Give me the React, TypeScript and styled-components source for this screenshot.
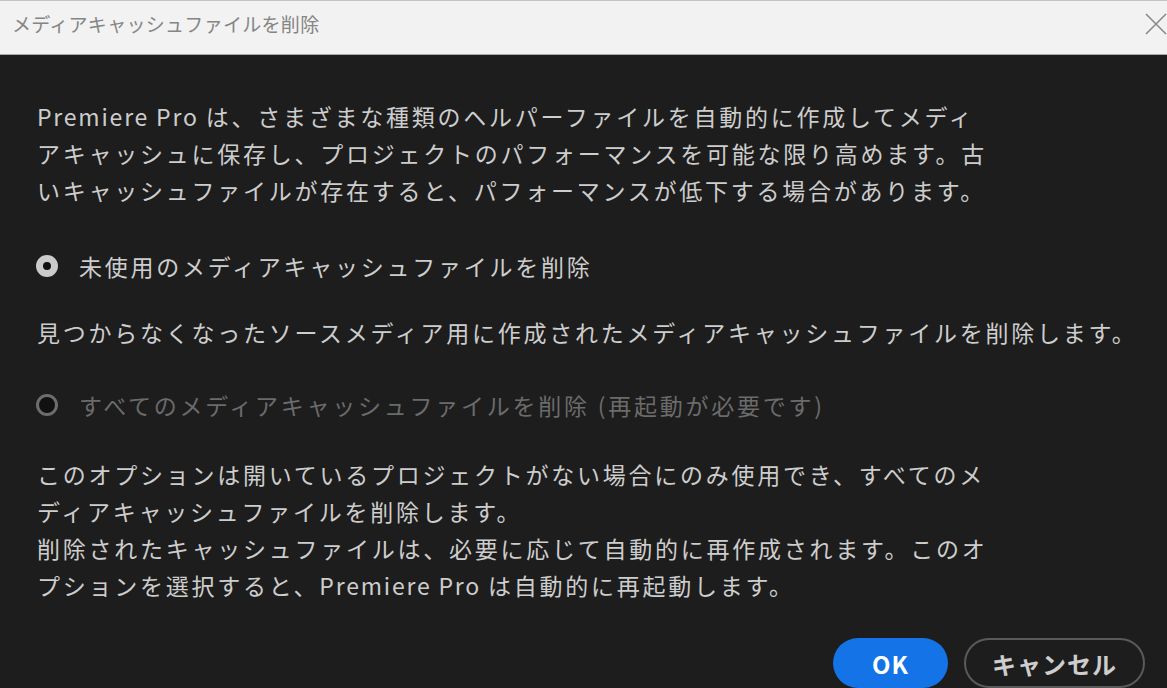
import React from "react";
import styled, { createGlobalStyle } from "styled-components";

const Global = createGlobalStyle`
  html, body { margin: 0; padding: 0; background: #1d1d1d; }
  body { width: 1167px; height: 688px; overflow: hidden; }
  * { box-sizing: border-box; }
`;

const FONT = `"Noto Sans CJK JP", "Noto Sans", sans-serif`;

const Dialog = styled.div`
  width: 1167px;
  height: 688px;
  display: flex;
  flex-direction: column;
  background: #1d1d1d;
  font-family: ${FONT};
  overflow: hidden;
`;

const TitleBar = styled.div`
  height: 55px;
  flex: none;
  display: flex;
  align-items: center;
  justify-content: space-between;
  background: #f2f2f2;
  border-top: 1px solid #c4c4c4;
  border-bottom: 1px solid #a9a9a9;
  padding: 0 0 8px 12px;
`;

const Title = styled.div`
  font-size: 19px;
  color: #858585;
  letter-spacing: 0.3px;
`;

const CloseBtn = styled.div`
  width: 22px;
  height: 22px;
  display: flex;
`;

const Body = styled.div`
  flex: 1;
  display: flex;
  flex-direction: column;
  padding: 43px 22px 0 37px;
`;

const Para = styled.p<{ $mt?: number }>`
  margin: ${(p) => p.$mt ?? 0}px 0 0 0;
  font-size: 23px;
  line-height: 37px;
  letter-spacing: 2.75px;
  color: #cdcdcd;
  white-space: nowrap;
`;

const Latin = styled.span`
  letter-spacing: 1.8px;
`;

const RadioRow = styled.div<{ $mt: number; $disabled?: boolean }>`
  margin-top: ${(p) => p.$mt}px;
  display: flex;
  align-items: center;
  height: 37px;
  gap: 21px;
  font-size: 23px;
  letter-spacing: 2.75px;
  color: ${(p) => (p.$disabled ? "#6b6b6b" : "#cdcdcd")};
  white-space: nowrap;
`;

const Radio = styled.span<{ $checked?: boolean }>`
  flex: none;
  width: 22px;
  height: 22px;
  border-radius: 50%;
  margin-left: -1px;
  background: #111;
  border: ${(p) => (p.$checked ? "7px solid #cbcbcb" : "3px solid #6d6d6d")};
`;

const Buttons = styled.div`
  margin-top: 34px;
  display: flex;
  justify-content: flex-end;
  gap: 16px;
`;

const Button = styled.button<{ $primary?: boolean }>`
  height: 50px;
  border-radius: 25px;
  font-family: ${FONT};
  font-weight: 700;
  font-size: 24px;
  letter-spacing: 1px;
  cursor: pointer;
  display: flex;
  align-items: center;
  justify-content: center;
  ${(p) =>
    p.$primary
      ? `
    width: 115px;
    background: #1473e6;
    border: none;
    color: #ffffff;
  `
      : `
    width: 181px;
    background: transparent;
    border: 2px solid #5a5a5a;
    color: #cdcdcd;
  `}
`;

export default function App() {
  return (
    <>
      <Global />
      <Dialog>
        <TitleBar>
          <Title>メディアキャッシュファイルを削除</Title>
          <CloseBtn>
            <svg width="22" height="22" viewBox="0 0 22 22">
              <path d="M1 1 L21 21 M21 1 L1 21" stroke="#8a8a8a" strokeWidth="1.6" fill="none" />
            </svg>
          </CloseBtn>
        </TitleBar>
        <Body>
          <Para>
            <Latin>Premiere Pro </Latin>は、さまざまな種類のヘルパーファイルを自動的に作成してメディ
            <br />
            アキャッシュに保存し、プロジェクトのパフォーマンスを可能な限り高めます。古
            <br />
            いキャッシュファイルが存在すると、パフォーマンスが低下する場合があります。
          </Para>
          <RadioRow $mt={38}>
            <Radio $checked />
            未使用のメディアキャッシュファイルを削除
          </RadioRow>
          <Para $mt={30}>
            見つからなくなったソースメディア用に作成されたメディアキャッシュファイルを削除します。
          </Para>
          <RadioRow $mt={35} $disabled>
            <Radio />
            すべてのメディアキャッシュファイルを削除 (再起動が必要です)
          </RadioRow>
          <Para $mt={33}>
            このオプションは開いているプロジェクトがない場合にのみ使用でき、すべてのメ
            <br />
            ディアキャッシュファイルを削除します。
            <br />
            削除されたキャッシュファイルは、必要に応じて自動的に再作成されます。このオ
            <br />
            プションを選択すると、<Latin>Premiere Pro </Latin>は自動的に再起動します。
          </Para>
          <Buttons>
            <Button $primary>OK</Button>
            <Button>キャンセル</Button>
          </Buttons>
        </Body>
      </Dialog>
    </>
  );
}
